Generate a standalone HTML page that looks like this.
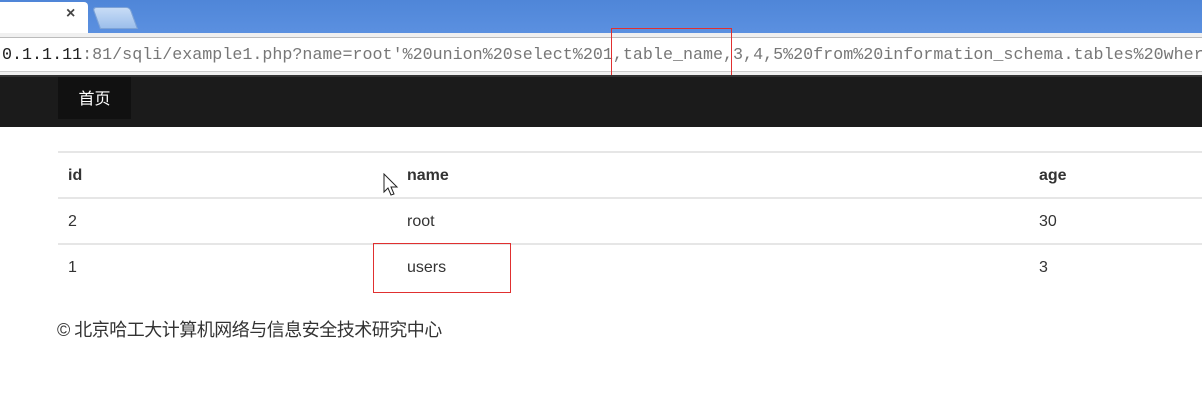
<!DOCTYPE html>
<html><head><meta charset="utf-8"><style>
body{margin:0;width:1202px;height:403px;overflow:hidden;background:#fff;position:relative;font-family:"Liberation Sans","Noto Sans CJK SC",sans-serif}
.tabbar{position:absolute;left:0;top:0;width:1202px;height:33px;background:linear-gradient(#4f86d8,#5b90e0)}
.tab{position:absolute;left:0;top:2px;width:88px;height:31px;background:#fff;border-radius:0 4px 0 0}
.tabx{position:absolute;left:66px;top:5px;font-size:16px;color:#444;font-weight:bold}
.ntab{position:absolute;left:96px;top:7px;width:36px;height:20px;background:linear-gradient(#c7dcf6,#9dbfeb);border:1px solid #7ea3d6;border-radius:4px 4px 0 0;transform:skewX(20deg)}
.addr{position:absolute;left:0;top:33px;width:1202px;height:42px;background:#f0f0f0}
.addr .in{position:absolute;left:0;top:4px;width:1202px;height:33px;background:#fff;border-top:1px solid #bbb;border-bottom:1px solid #ccc}
.url{position:absolute;left:2px;top:8px;font-family:"Liberation Mono",monospace;font-size:16.7px;color:#777;white-space:nowrap}
.url b{font-weight:normal;color:#222}
.nav{position:absolute;left:0;top:75px;width:1202px;height:50px;background:#1b1b1b;border-top:2px solid #333}
.act{position:absolute;left:58px;top:0;width:73px;height:42px;background:#111;color:#fff;font-size:16px;text-align:center;line-height:46px}
.ln{position:absolute;left:58px;width:1144px;height:2px;background:#e6e6e6}
.t{position:absolute;font-size:16px;color:#333}
.h{font-weight:bold}
.red{position:absolute;border:1px solid #e03030}
</style></head><body>
<div class="tabbar"><div class="tab"></div><div class="tabx">×</div><div class="ntab"></div></div>
<div class="addr"><div class="in"><div class="url"><b>0.1.1.11</b>:81/sqli/example1.php?name=root'%20union%20select%201,table_name,3,4,5%20from%20information_schema.tables%20where</div></div></div>
<div class="red" style="left:611px;top:28px;width:119px;height:48px"></div>
<div class="nav"><div class="act">首页</div></div>
<div class="ln" style="top:151px"></div>
<div class="t h" style="left:68px;top:167px">id</div>
<div class="t h" style="left:407px;top:167px">name</div>
<div class="t h" style="left:1039px;top:167px">age</div>
<svg style="position:absolute;left:383px;top:173px" width="16" height="26" viewBox="0 0 16 26"><path d="M1 1 L1 19 L5 15 L8 22 L11 21 L8 14 L14 14 Z" fill="#fff" stroke="#222" stroke-width="1"/></svg>
<div class="ln" style="top:197px"></div>
<div class="t" style="left:68px;top:213px">2</div>
<div class="t" style="left:407px;top:213px">root</div>
<div class="t" style="left:1039px;top:213px">30</div>
<div class="ln" style="top:243px"></div>
<div class="t" style="left:68px;top:259px">1</div>
<div class="t" style="left:407px;top:259px">users</div>
<div class="t" style="left:1039px;top:259px">3</div>
<div class="red" style="left:373px;top:243px;width:136px;height:48px"></div>
<div class="t" style="left:57px;top:316px;font-size:18px;letter-spacing:-0.5px">© 北京哈工大计算机网络与信息安全技术研究中心</div>
</body></html>
